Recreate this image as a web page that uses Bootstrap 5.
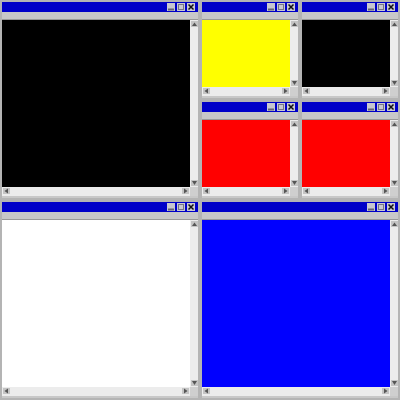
<!DOCTYPE html>
<html><head><meta charset="utf-8">
<link href="https://cdn.jsdelivr.net/npm/bootstrap@5.3.0/dist/css/bootstrap.min.css" rel="stylesheet">
<style>
html,body{margin:0;width:400px;height:400px;overflow:hidden;background:#b4b4b4}
.desk{display:grid;width:400px;height:400px;grid-template-columns:200px 200px;grid-template-rows:200px 200px}
.sub{display:grid;grid-template-columns:100px 100px;grid-template-rows:100px 100px}
.win{margin:2px;display:flex;flex-direction:column;min-width:0;min-height:0;background:#cfcfcf}
.ttl{height:10px;background:#0000c8;display:flex;justify-content:flex-end;align-items:center;gap:2px;padding-right:3px;flex:none}
.tb{width:8px;height:8px;display:block;background:#c8c8d0}
.bar{height:8px;background:#c8c8c8;border-bottom:1px solid #999;flex:none}
.mid{flex:1;display:flex;min-height:0}
.view{flex:1;min-width:0}
.vs{width:8px;background:#ececec;display:flex;flex-direction:column;justify-content:space-between;flex:none;padding:1px 0}
.hs{height:9px;background:#ececec;display:flex;justify-content:space-between;flex:none;margin-right:8px;padding:1px 0 2px}
.foot{height:2px;flex:none;background:#c8c8c8}
.sb{display:block;width:7px;height:6px;flex:none;background:#c4c4c4;margin-left:1px}
.hs .sb{margin:0 0 0 1px}
.hs .sb:last-child{margin:0 1px 0 0}
.k{background:#000}.y{background:#ff0}.r{background:#f00}.w{background:#fff}.b{background:#00f}
</style></head><body>
<div class="desk">
<div class="win"><div class="ttl"><svg class="tb" viewBox="0 0 8 8"><path d="M1 6.500h6" stroke="#667" stroke-width="2"/></svg><svg class="tb" viewBox="0 0 8 8"><rect x="1.500" y="1.500" width="5" height="5" fill="none" stroke="#778"/></svg><svg class="tb" viewBox="0 0 8 8"><path d="M1.500 1.500l5 5M6.500 1.500l-5 5" stroke="#111" stroke-width="1.500"/></svg></div><div class="bar"></div><div class="mid"><div class="view k"></div><div class="vs"><svg class="sb" viewBox="0 0 7 6"><path d="M3.500 1.500L6 5H1z" fill="#555"/></svg><svg class="sb" viewBox="0 0 7 6"><path d="M3.500 5L6 1H1z" fill="#555"/></svg></div></div><div class="hs"><svg class="sb" viewBox="0 0 7 6"><path d="M1.500 3L5 .5v5z" fill="#555"/></svg><svg class="sb" viewBox="0 0 7 6"><path d="M5.500 3L2 .5v5z" fill="#555"/></svg></div><div class="foot"></div></div>
<div class="sub">
<div class="win"><div class="ttl"><svg class="tb" viewBox="0 0 8 8"><path d="M1 6.500h6" stroke="#667" stroke-width="2"/></svg><svg class="tb" viewBox="0 0 8 8"><rect x="1.500" y="1.500" width="5" height="5" fill="none" stroke="#778"/></svg><svg class="tb" viewBox="0 0 8 8"><path d="M1.500 1.500l5 5M6.500 1.500l-5 5" stroke="#111" stroke-width="1.500"/></svg></div><div class="bar"></div><div class="mid"><div class="view y"></div><div class="vs"><svg class="sb" viewBox="0 0 7 6"><path d="M3.500 1.500L6 5H1z" fill="#555"/></svg><svg class="sb" viewBox="0 0 7 6"><path d="M3.500 5L6 1H1z" fill="#555"/></svg></div></div><div class="hs"><svg class="sb" viewBox="0 0 7 6"><path d="M1.500 3L5 .5v5z" fill="#555"/></svg><svg class="sb" viewBox="0 0 7 6"><path d="M5.500 3L2 .5v5z" fill="#555"/></svg></div><div class="foot"></div></div>
<div class="win"><div class="ttl"><svg class="tb" viewBox="0 0 8 8"><path d="M1 6.500h6" stroke="#667" stroke-width="2"/></svg><svg class="tb" viewBox="0 0 8 8"><rect x="1.500" y="1.500" width="5" height="5" fill="none" stroke="#778"/></svg><svg class="tb" viewBox="0 0 8 8"><path d="M1.500 1.500l5 5M6.500 1.500l-5 5" stroke="#111" stroke-width="1.500"/></svg></div><div class="bar"></div><div class="mid"><div class="view k"></div><div class="vs"><svg class="sb" viewBox="0 0 7 6"><path d="M3.500 1.500L6 5H1z" fill="#555"/></svg><svg class="sb" viewBox="0 0 7 6"><path d="M3.500 5L6 1H1z" fill="#555"/></svg></div></div><div class="hs"><svg class="sb" viewBox="0 0 7 6"><path d="M1.500 3L5 .5v5z" fill="#555"/></svg><svg class="sb" viewBox="0 0 7 6"><path d="M5.500 3L2 .5v5z" fill="#555"/></svg></div><div class="foot"></div></div>
<div class="win"><div class="ttl"><svg class="tb" viewBox="0 0 8 8"><path d="M1 6.500h6" stroke="#667" stroke-width="2"/></svg><svg class="tb" viewBox="0 0 8 8"><rect x="1.500" y="1.500" width="5" height="5" fill="none" stroke="#778"/></svg><svg class="tb" viewBox="0 0 8 8"><path d="M1.500 1.500l5 5M6.500 1.500l-5 5" stroke="#111" stroke-width="1.500"/></svg></div><div class="bar"></div><div class="mid"><div class="view r"></div><div class="vs"><svg class="sb" viewBox="0 0 7 6"><path d="M3.500 1.500L6 5H1z" fill="#555"/></svg><svg class="sb" viewBox="0 0 7 6"><path d="M3.500 5L6 1H1z" fill="#555"/></svg></div></div><div class="hs"><svg class="sb" viewBox="0 0 7 6"><path d="M1.500 3L5 .5v5z" fill="#555"/></svg><svg class="sb" viewBox="0 0 7 6"><path d="M5.500 3L2 .5v5z" fill="#555"/></svg></div><div class="foot"></div></div>
<div class="win"><div class="ttl"><svg class="tb" viewBox="0 0 8 8"><path d="M1 6.500h6" stroke="#667" stroke-width="2"/></svg><svg class="tb" viewBox="0 0 8 8"><rect x="1.500" y="1.500" width="5" height="5" fill="none" stroke="#778"/></svg><svg class="tb" viewBox="0 0 8 8"><path d="M1.500 1.500l5 5M6.500 1.500l-5 5" stroke="#111" stroke-width="1.500"/></svg></div><div class="bar"></div><div class="mid"><div class="view r"></div><div class="vs"><svg class="sb" viewBox="0 0 7 6"><path d="M3.500 1.500L6 5H1z" fill="#555"/></svg><svg class="sb" viewBox="0 0 7 6"><path d="M3.500 5L6 1H1z" fill="#555"/></svg></div></div><div class="hs"><svg class="sb" viewBox="0 0 7 6"><path d="M1.500 3L5 .5v5z" fill="#555"/></svg><svg class="sb" viewBox="0 0 7 6"><path d="M5.500 3L2 .5v5z" fill="#555"/></svg></div><div class="foot"></div></div>
</div>
<div class="win"><div class="ttl"><svg class="tb" viewBox="0 0 8 8"><path d="M1 6.500h6" stroke="#667" stroke-width="2"/></svg><svg class="tb" viewBox="0 0 8 8"><rect x="1.500" y="1.500" width="5" height="5" fill="none" stroke="#778"/></svg><svg class="tb" viewBox="0 0 8 8"><path d="M1.500 1.500l5 5M6.500 1.500l-5 5" stroke="#111" stroke-width="1.500"/></svg></div><div class="bar"></div><div class="mid"><div class="view w"></div><div class="vs"><svg class="sb" viewBox="0 0 7 6"><path d="M3.500 1.500L6 5H1z" fill="#555"/></svg><svg class="sb" viewBox="0 0 7 6"><path d="M3.500 5L6 1H1z" fill="#555"/></svg></div></div><div class="hs"><svg class="sb" viewBox="0 0 7 6"><path d="M1.500 3L5 .5v5z" fill="#555"/></svg><svg class="sb" viewBox="0 0 7 6"><path d="M5.500 3L2 .5v5z" fill="#555"/></svg></div><div class="foot"></div></div>
<div class="win"><div class="ttl"><svg class="tb" viewBox="0 0 8 8"><path d="M1 6.500h6" stroke="#667" stroke-width="2"/></svg><svg class="tb" viewBox="0 0 8 8"><rect x="1.500" y="1.500" width="5" height="5" fill="none" stroke="#778"/></svg><svg class="tb" viewBox="0 0 8 8"><path d="M1.500 1.500l5 5M6.500 1.500l-5 5" stroke="#111" stroke-width="1.500"/></svg></div><div class="bar"></div><div class="mid"><div class="view b"></div><div class="vs"><svg class="sb" viewBox="0 0 7 6"><path d="M3.500 1.500L6 5H1z" fill="#555"/></svg><svg class="sb" viewBox="0 0 7 6"><path d="M3.500 5L6 1H1z" fill="#555"/></svg></div></div><div class="hs"><svg class="sb" viewBox="0 0 7 6"><path d="M1.500 3L5 .5v5z" fill="#555"/></svg><svg class="sb" viewBox="0 0 7 6"><path d="M5.500 3L2 .5v5z" fill="#555"/></svg></div><div class="foot"></div></div>
</div>
<script src="https://cdn.jsdelivr.net/npm/bootstrap@5.3.0/dist/js/bootstrap.bundle.min.js"></script>
</body></html>
